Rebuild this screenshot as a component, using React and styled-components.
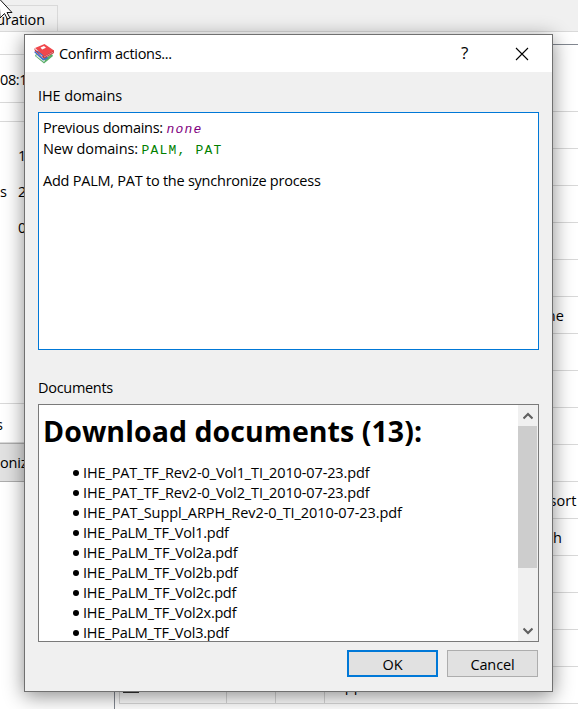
import React from "react";
import styled, { createGlobalStyle } from "styled-components";

const GlobalStyle = createGlobalStyle`
  * { box-sizing: border-box; }
  body {
    margin: 0;
    overflow: hidden;
    font-family: "Open Sans", "Noto Sans", sans-serif;
    font-size: 15px;
    line-height: 20px;
    color: #000;
  }
`;

const Screen = styled.div`
  position: relative;
  display: flex;
  flex-direction: column;
  width: 578px;
  height: 709px;
  overflow: hidden;
  background: #fff;
`;

const TabBar = styled.div`
  display: flex;
  align-items: flex-end;
  flex: none;
  height: 32px;
  background: #f0f0f0;
  border-bottom: 1px solid #d9d9d9;
`;

const Tab = styled.div`
  display: flex;
  justify-content: flex-end;
  width: 58px;
  height: 26px;
  padding: 4px 12px 0 0;
  border: 1px solid #d9d9d9;
  border-width: 1px 1px 0 0;
  white-space: nowrap;
`;

const Text = styled.span`
  display: inline-block;
  white-space: pre;
  font-size: ${(p) => p.$size || 14.5}px;
  letter-spacing: ${(p) => p.$ls || 0}px;
`;

const Body = styled.div`
  display: flex;
  flex: 1;
`;

const SidePanel = styled.div`
  display: flex;
  flex-direction: column;
  width: 114px;
`;

const SideSection = styled.div`
  display: flex;
  flex-direction: column;
  flex: none;
  height: ${(p) => p.$h}px;
  padding-top: ${(p) => p.$top || 0}px;
  border-bottom: 1px solid #d9d9d9;
`;

const SideRow = styled.div`
  display: flex;
  height: 36px;
  gap: 11px;
`;

const SideLabel = styled.div`
  width: ${(p) => p.$w}px;
  display: flex;
  justify-content: flex-end;
`;

const SideButton = styled.div`
  display: flex;
  align-items: center;
  flex: none;
  height: 39px;
  width: 100px;
  padding-top: 1px;
  background: #e1e1e1;
  border: 1px solid #adadad;
  border-left: 0;
`;

const Table = styled.div`
  flex: 1;
  margin-top: 12px;
  padding-left: 4px;
  border: 1px solid #828790;
  border-width: 1px 0 0 1px;
`;

const TableRow = styled.div`
  display: grid;
  grid-template-columns: 107px 49px 49px 1fr;
  height: ${(p) => p.$h || 37}px;
  border-bottom: 1px solid #d8d8d8;
  border-left: 1px solid #d8d8d8;
`;

const Cell = styled.div`
  display: flex;
  align-items: center;
  padding-top: 2px;
  padding-left: ${(p) => p.$pad || 0}px;
  border-right: 1px solid #d8d8d8;

  &:last-child {
    border-right: 0;
  }
`;

const CheckBox = styled.div`
  width: 16px;
  height: 15px;
  margin-top: -2px;
  border: 1px solid #333;
  background: #fff;
`;

const Dialog = styled.div`
  position: absolute;
  left: 24px;
  top: 34px;
  display: flex;
  flex-direction: column;
  width: 529px;
  height: 658px;
  background: #f0f0f0;
  border: 1px solid #707070;
  box-shadow: 0 4px 19px rgba(0, 0, 0, 0.46);
`;

const TitleBar = styled.div`
  display: flex;
  align-items: center;
  flex: none;
  height: 37px;
  padding: 0 23px 0 9px;
  background: #fff;
`;

const Title = styled.div`
  flex: 1;
  margin-left: 5px;
`;

const HelpMark = styled.div`
  width: 10px;
  margin-right: 44px;
  transform: translateY(-1px);
`;

const Content = styled.div`
  display: flex;
  flex-direction: column;
  padding: 14px 13px 0;
`;

const Frame = styled.div`
  display: flex;
  height: 238px;
  margin: 6px 0 ${(p) => p.$gap}px;
  background: #fff;
  border: 1px solid ${(p) => p.$color};
  overflow: hidden;
`;

const Lines = styled.div`
  display: flex;
  flex-direction: column;
  padding: 5px 4px;
`;

const Line = styled.div`
  display: flex;
  align-items: flex-start;
  height: ${(p) => p.$h}px;
  white-space: pre;
`;

const Code = styled.span`
  padding-top: 2px;
  font-family: "Courier New", "Liberation Mono", monospace;
  font-size: 13px;
  letter-spacing: 1.2px;
  color: ${(p) => p.$color};
  font-style: ${(p) => (p.$italic ? "italic" : "normal")};
`;

const Documents = styled.div`
  flex: 1;
  padding-left: 4px;
`;

const Heading = styled.h1`
  margin: 7px 0 12px;
  font-size: 28.5px;
  line-height: 39px;
  letter-spacing: ${(p) => p.$ls}px;
  white-space: nowrap;
`;

const List = styled.ul`
  margin: 0;
  padding: 0 0 0 30px;
  list-style: none;
`;

const Item = styled.li`
  display: flex;
  align-items: center;
  gap: 4px;
  height: 20px;

  &::before {
    content: "";
    width: 6px;
    height: 6px;
    border-radius: 50%;
    background: #000;
  }
`;

const ScrollBar = styled.div`
  display: flex;
  flex-direction: column;
  justify-content: space-between;
  width: 20px;
  background: #f0f0f0;
`;

const ScrollArrow = styled.div`
  display: flex;
  align-items: center;
  justify-content: center;
  height: 21px;
`;

const ScrollThumb = styled.div`
  width: 19px;
  height: 142px;
  margin-bottom: auto;
  background: #cdcdcd;
`;

const Actions = styled.div`
  display: flex;
  justify-content: flex-end;
  gap: 9px;
  padding-right: 1px;
`;

const Button = styled.button`
  width: 91px;
  height: 27px;
  padding: 1px 0 0;
  font: inherit;
  color: #000;
  background: #e1e1e1;
  border: ${(p) => (p.$primary ? "2px solid #0078d7" : "1px solid #adadad")};
`;

const Cursor = styled.svg`
  position: absolute;
  left: 0;
  top: 0;
`;

const BooksIcon = () => (
  <svg width="20" height="20" viewBox="0 0 20 20">
    <path d="M1 12l9 7.500 9-7.500-1-2-8 5-8-5z" fill="#58ad67" />
    <path d="M2 12l8 6 1-1.500-8-6z" fill="#e6eee8" />
    <path d="M0 8l9 8.500 5-2-2-4-9-4z" fill="#3f73c8" />
    <path d="M1.500 7.500l8 7 1-1-8-6z" fill="#dfe7f5" />
    <path d="M0 4l8 8.500L20 6v3l-10 5.500L1 7z" fill="#c9343a" />
    <path d="M10 13l9.500-5" fill="none" stroke="#efb5b5" strokeWidth=".7" />
    <path d="M1 4L10.500 0 20 6.500 10 12z" fill="#f0484c" />
    <path d="M6.500 3.500l3.500-1.500 2 1.800L8.200 5.500z" fill="#fff" />
  </svg>
);

const Arrow = ({ d }) => (
  <svg width="10" height="8" viewBox="0 0 10 8">
    <path d={d} fill="none" stroke="#606060" strokeWidth="2.2" />
  </svg>
);

const FILES = [
  ["IHE_PAT_TF_Rev2-0_Vol1_TI_2010-07-23.pdf", -0.12],
  ["IHE_PAT_TF_Rev2-0_Vol2_TI_2010-07-23.pdf", -0.12],
  ["IHE_PAT_Suppl_ARPH_Rev2-0_TI_2010-07-23.pdf", -0.08],
  ["IHE_PaLM_TF_Vol1.pdf", -0.24],
  ["IHE_PaLM_TF_Vol2a.pdf", -0.2],
  ["IHE_PaLM_TF_Vol2b.pdf", -0.22],
  ["IHE_PaLM_TF_Vol2c.pdf", -0.2],
  ["IHE_PaLM_TF_Vol2x.pdf", -0.22],
  ["IHE_PaLM_TF_Vol3.pdf", -0.24],
];

const ROWS = ["", "", "", "", "", "Baseline", "", "", "", "", "Patient data resort", "Summary of health", "", "", "", "Supplement"];
const PADS = { 5: 182, 10: 125, 11: 108, 15: 3 };

export default function App() {
  return (
    <>
      <GlobalStyle />
      <Screen>
        <TabBar>
          <Tab><Text $ls={-0.1}>Configuration</Text></Tab>
        </TabBar>
        <Body>
          <SidePanel>
            <SideSection $h={23} />
            <SideSection $h={48} $top={15}><Text $ls={-0.4}>08:12:40</Text></SideSection>
            <SideSection $h={19} />
            <SideSection $h={282} $top={24}>
              {[["", "12"], ["s", "24"], ["", "0"]].map(([label, value]) => (
                <SideRow key={value}>
                  <SideLabel $w={7}><Text>{label}</Text></SideLabel>
                  <Text>{value}</Text>
                </SideRow>
              ))}
            </SideSection>
            <SideSection $h={39} $top={11}>
              <SideLabel $w={3}><Text>s</Text></SideLabel>
            </SideSection>
            <SideButton><Text $ls={-0.2}>onize</Text></SideButton>
          </SidePanel>
          <Table>
            <TableRow $h={67} />
            {ROWS.map((label, i) => (
              <TableRow key={i}>
                <Cell $pad={3}>{i === 15 && <CheckBox />}</Cell>
                <Cell />
                <Cell />
                <Cell $pad={PADS[i]}><Text>{label}</Text></Cell>
              </TableRow>
            ))}
          </Table>
        </Body>
        <Cursor width="14" height="20" viewBox="0 0 14 20">
          <path d="M-1-1.500L12 12.500H7l3 5.500-2.500 1L4.500 13.500 0 18z" fill="#fff" stroke="#111" />
        </Cursor>
        <Dialog>
          <TitleBar>
            <BooksIcon />
            <Title><Text $ls={-0.3}>Confirm actions...</Text></Title>
            <HelpMark><Text $size={17}>?</Text></HelpMark>
            <svg width="14" height="14" viewBox="0 0 14 14">
              <path d="M1 1l12 12M13 1L1 13" stroke="#000" strokeWidth="1.1" />
            </svg>
          </TitleBar>
          <Content>
            <Text $ls={-0.1}>IHE domains</Text>
            <Frame $color="#0078d7" $gap={28}>
              <Lines>
                <Line $h={21}><Text $ls={-0.26}>Previous domains: </Text><Code $color="#800080" $italic>none</Code></Line>
                <Line $h={32}><Text $ls={-0.13}>New domains: </Text><Code $color="#008000">PALM, PAT</Code></Line>
                <Line $h={20}><Text $ls={-0.24}>Add PALM, PAT to the synchronize process</Text></Line>
              </Lines>
            </Frame>
            <Text $ls={-0.3}>Documents</Text>
            <Frame $color="#7a7a7a" $gap={8}>
              <Documents>
                <Heading $ls={0.07}>Download documents (13):</Heading>
                <List>
                  {FILES.map(([name, ls]) => (
                    <Item key={name}><Text $ls={ls}>{name}</Text></Item>
                  ))}
                </List>
              </Documents>
              <ScrollBar>
                <ScrollArrow><Arrow d="M.5 6.500L5 2l4.500 4.500" /></ScrollArrow>
                <ScrollThumb />
                <ScrollArrow><Arrow d="M.5 1.500L5 6l4.500-4.500" /></ScrollArrow>
              </ScrollBar>
            </Frame>
            <Actions>
              <Button $primary><Text>OK</Text></Button>
              <Button><Text $ls={-0.1}>Cancel</Text></Button>
            </Actions>
          </Content>
        </Dialog>
      </Screen>
    </>
  );
}
